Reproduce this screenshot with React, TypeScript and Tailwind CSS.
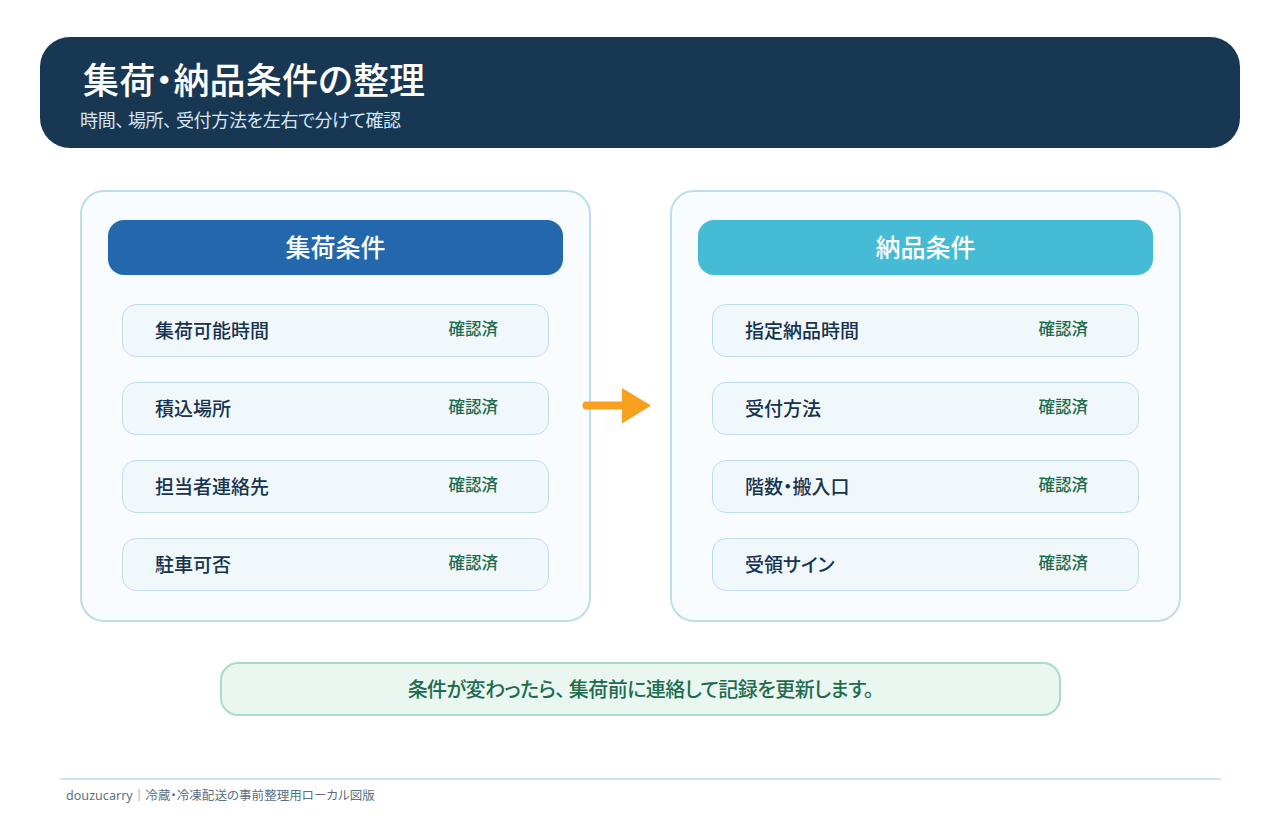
const FONT = "font-['Noto_Sans','Noto_Sans_CJK_JP',sans-serif] [font-feature-settings:'palt']";

const PICKUP = ["集荷可能時間", "積込場所", "担当者連絡先", "駐車可否"];
const DELIVERY = ["指定納品時間", "受付方法", "階数・搬入口", "受領サイン"];

function ConditionPanel({
  title,
  items,
  headerClass,
}: {
  title: string;
  items: string[];
  headerClass: string;
}) {
  return (
    <section className="w-[511px] h-[432px] rounded-[24px] border-2 border-[#bfdcec] bg-[#f9fcff] pt-[28px] px-[26px]">
      <h2
        className={`h-[55px] pt-[1px] rounded-[16px] flex items-center justify-center text-white text-[25px] font-medium ${headerClass}`}
      >
        {title}
      </h2>
      <ul className="mt-[29px] mx-[14px] flex flex-col gap-[25px]">
        {items.map((item) => (
          <li
            key={item}
            className="h-[53px] rounded-[14px] border border-[#bfdcec] bg-[#f0f8fc] flex items-center justify-between pl-[32px] pr-[50px]"
          >
            <span className="text-[19px] font-medium text-[#16324f] mt-[1px]">{item}</span>
            <span className="text-[16.5px] font-medium text-[#1f6b4f] mb-[3px]">確認済</span>
          </li>
        ))}
      </ul>
    </section>
  );
}

export default function App() {
  return (
    <div className={`relative w-[1280px] h-[820px] bg-white overflow-hidden pt-[37px] ${FONT}`}>
      {/* Header */}
      <header className="mx-[40px] h-[111px] rounded-[30px] bg-[#173753] pl-[40px] pt-[20px]">
        <h1 className="pl-[3px] text-[36px] leading-[48px] tracking-[0.15px] font-medium text-white">
          集荷・納品条件の整理
        </h1>
        <p className="text-[18px] leading-[24px] mt-[3px] tracking-[-0.35px] text-[#d6e6f2]">
          時間<span className="mr-[4px]">、</span>場所<span className="mr-[4px]">、</span>受付方法を左右で分けて確認
        </p>
      </header>

      {/* Panels */}
      <div className="mt-[42px] flex gap-[79px] pl-[80px]">
        <ConditionPanel title="集荷条件" items={PICKUP} headerClass="bg-[#2368ad]" />
        <ConditionPanel title="納品条件" items={DELIVERY} headerClass="bg-[#45bbd6]" />
      </div>

      {/* Arrow between the panels */}
      <svg className="absolute left-[580px] top-[385px]" width="74" height="42" viewBox="0 0 74 42">
        <line x1="6.5" y1="20.5" x2="44" y2="20.5" stroke="#f79f1f" strokeWidth="8" strokeLinecap="round" />
        <polygon points="42,3 71,20.5 42,38.5" fill="#f79f1f" />
      </svg>

      {/* Note */}
      <div className="mt-[40px] mx-[220px] w-[841px] h-[54px] pt-[2px] rounded-[18px] border-2 border-[#a8dcc4] bg-[#e9f7f0] flex items-center justify-center text-[20px] tracking-[-0.55px] font-medium text-[#1f6b4f]">
        条件が変わったら<span className="mr-[4px]">、</span>集荷前に連絡して記録を更新します。
      </div>

      {/* Footer */}
      <footer className="mt-[62px] mx-[60px] w-[1161px] border-t-2 border-[#cfe3ef] pl-[6px] pt-[7px] text-[12.5px] leading-[18px] tracking-[0.05px] text-[#5a6f84]">
        douzucarry｜冷蔵・冷凍配送の事前整理用ローカル図版
      </footer>
    </div>
  );
}
